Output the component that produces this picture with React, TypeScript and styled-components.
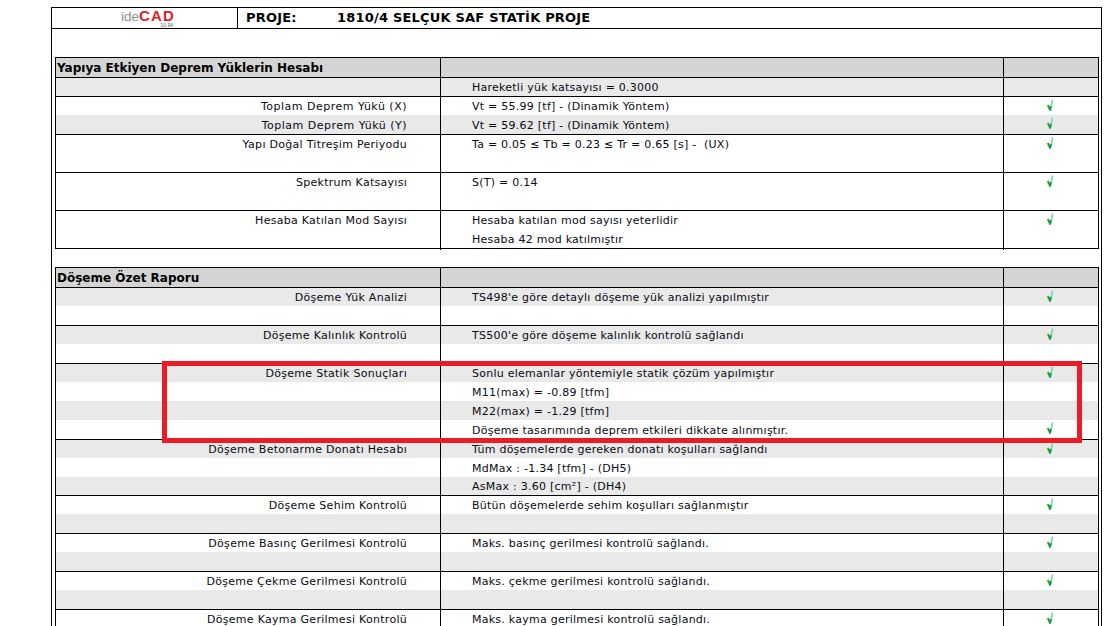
import styled, { createGlobalStyle } from "styled-components";

const GlobalStyle = createGlobalStyle`
  html, body {
    margin: 0;
    padding: 0;
    background: #fff;
    overflow: hidden;
  }
  body {
    font-family: "DejaVu Sans", Verdana, sans-serif;
    font-size: 11px;
    color: #0a0a14;
  }
`;

type RowData = {
  label?: string;
  value?: string;
  ok?: boolean;
  gray?: boolean;
  short?: boolean;
  line?: boolean;
  wide?: boolean;
};

const loadRows: RowData[] = [
  { value: "Hareketli yük katsayısı = 0.3000", gray: true, short: true, line: true },
  { label: "Toplam Deprem Yükü (X)", value: "Vt = 55.99 [tf] - (Dinamik Yöntem)", ok: true, short: true, wide: true },
  { label: "Toplam Deprem Yükü (Y)", value: "Vt = 59.62 [tf] - (Dinamik Yöntem)", ok: true, gray: true, line: true, wide: true },
  { label: "Yapı Doğal Titreşim Periyodu", value: "Ta = 0.05 ≤ Tb = 0.23 ≤ Tr = 0.65 [s] -  (UX)", ok: true, short: true },
  { line: true },
  { label: "Spektrum Katsayısı", value: "S(T) = 0.14", ok: true, short: true },
  { line: true },
  { label: "Hesaba Katılan Mod Sayısı", value: "Hesaba katılan mod sayısı yeterlidir", ok: true, short: true },
  { value: "Hesaba 42 mod katılmıştır" },
];

const slabRows: RowData[] = [
  { label: "Döşeme Yük Analizi", value: "TS498'e göre detaylı döşeme yük analizi yapılmıştır", ok: true, gray: true, short: true },
  { line: true },
  { label: "Döşeme Kalınlık Kontrolü", value: "TS500'e göre döşeme kalınlık kontrolü sağlandı", ok: true, gray: true, short: true },
  { line: true },
  { label: "Döşeme Statik Sonuçları", value: "Sonlu elemanlar yöntemiyle statik çözüm yapılmıştır", ok: true, gray: true, short: true },
  { value: "M11(max) = -0.89 [tfm]" },
  { value: "M22(max) = -1.29 [tfm]", gray: true },
  { value: "Döşeme tasarımında deprem etkileri dikkate alınmıştır.", ok: true, line: true },
  { label: "Döşeme Betonarme Donatı Hesabı", value: "Tüm döşemelerde gereken donatı koşulları sağlandı", ok: true, gray: true, short: true },
  { value: "MdMax : -1.34 [tfm] - (DH5)" },
  { value: "AsMax : 3.60 [cm²] - (DH4)", gray: true, short: true, line: true },
  { label: "Döşeme Sehim Kontrolü", value: "Bütün döşemelerde sehim koşulları sağlanmıştır", ok: true, short: true },
  { gray: true, line: true },
  { label: "Döşeme Basınç Gerilmesi Kontrolü", value: "Maks. basınç gerilmesi kontrolü sağlandı.", ok: true, short: true },
  { gray: true, line: true },
  { label: "Döşeme Çekme Gerilmesi Kontrolü", value: "Maks. çekme gerilmesi kontrolü sağlandı.", ok: true, short: true },
  { gray: true, line: true },
  { label: "Döşeme Kayma Gerilmesi Kontrolü", value: "Maks. kayma gerilmesi kontrolü sağlandı.", ok: true, short: true },
];

function CheckMark() {
  return (
    <svg width="8" height="12" viewBox="0 0 8 12">
      <path d="M6.6 0.5 L4.6 10.5" stroke="#7ed6a4" strokeWidth="1.6" fill="none" />
      <path d="M0.7 6 L3 10.5" stroke="#e6d65a" strokeWidth="1.2" fill="none" />
      <path d="M2 6 L4 10.8 L5 7" stroke="#0f9c48" strokeWidth="1.8" fill="none" />
    </svg>
  );
}

function ReportTable({ title, rows }: { title: string; rows: RowData[] }) {
  return (
    <Table>
      <HeadRow>
        <HeadCell>{title}</HeadCell>
        <HeadCell />
        <HeadCell />
      </HeadRow>
      {rows.map((row, i) => (
        <Row key={i} $gray={row.gray} $short={row.short} $line={row.line}>
          <LabelCell $wide={row.wide}>{row.label}</LabelCell>
          <ValueCell>{row.value}</ValueCell>
          <CheckCell>{row.ok ? <CheckMark /> : null}</CheckCell>
        </Row>
      ))}
    </Table>
  );
}

export default function App() {
  return (
    <>
      <GlobalStyle />
      <Page>
        <Frame>
          <TopBar>
            <LogoCell>
              <Logo>
                <LogoIde>ide</LogoIde>
                <LogoCad>CAD</LogoCad>
                <LogoVersion>10.94</LogoVersion>
              </Logo>
            </LogoCell>
            <ProjectCell>
              <ProjectKey>PROJE:</ProjectKey>
              <span>1810/4 SELÇUK SAF STATİK PROJE</span>
            </ProjectCell>
          </TopBar>
          <Tables>
            <ReportTable title="Yapıya Etkiyen Deprem Yüklerin Hesabı" rows={loadRows} />
            <ReportTable title="Döşeme Özet Raporu" rows={slabRows} />
          </Tables>
        </Frame>
        <Highlight />
      </Page>
    </>
  );
}

const Page = styled.div`
  position: relative;
  width: 1109px;
  height: 626px;
  padding: 7px 0 0 51px;
  box-sizing: border-box;
  overflow: hidden;
`;

const Frame = styled.div`
  width: 1051px;
  border: 1px solid #000;
  border-bottom: none;
  box-sizing: border-box;
`;

const TopBar = styled.div`
  display: grid;
  grid-template-columns: 186px 1fr;
  height: 20px;
  border-bottom: 1px solid #000;
`;

const LogoCell = styled.div`
  display: flex;
  justify-content: center;
  padding-left: 7px;
  border-right: 1px solid #000;
`;

const Logo = styled.div`
  position: relative;
  display: flex;
  align-items: baseline;
  height: 20px;
  font-family: "Liberation Sans", Arial, sans-serif;
  line-height: 15px;
`;

const LogoIde = styled.span`
  color: #8f8f8f;
  font-size: 13.5px;
`;

const LogoCad = styled.span`
  color: #dc1f26;
  font-size: 15px;
  font-weight: 700;
  letter-spacing: 1.2px;
`;

const LogoVersion = styled.span`
  position: absolute;
  right: 2px;
  top: 15px;
  color: #666;
  font-size: 5px;
  line-height: 5px;
`;

const ProjectCell = styled.div`
  display: flex;
  align-items: center;
  padding: 0 0 2px 8px;
  font-size: 13px;
  font-weight: 700;
  letter-spacing: 0.2px;
  color: #000;
`;

const ProjectKey = styled.span`
  width: 91px;
`;

const Tables = styled.div`
  display: flex;
  flex-direction: column;
  gap: 18px;
  padding: 28px 2px 0 3px;
`;

const Table = styled.div`
  border: 1px solid #000;
  box-sizing: border-box;
`;

const HeadRow = styled.div`
  display: grid;
  grid-template-columns: 385px 563px 1fr;
  height: 20px;
  box-sizing: border-box;
  background: #d4d4d4;
  border-bottom: 1px solid #000;
`;

const HeadCell = styled.div`
  padding-left: 1px;
  font-size: 12px;
  font-weight: 700;
  line-height: 20px;
  color: #000;
  border-right: 1px solid #000;

  &:last-child {
    border-right: none;
  }
`;

const Row = styled.div<{ $gray?: boolean; $short?: boolean; $line?: boolean }>`
  display: grid;
  grid-template-columns: 385px 563px 1fr;
  height: ${(p) => (p.$short ? 18 : 19) + (p.$line ? 1 : 0)}px;
  box-sizing: border-box;
  line-height: ${(p) => (p.$short ? 19 : 21)}px;
  background: ${(p) => (p.$gray ? "#e9e9e9" : "#fff")};
  border-bottom: ${(p) => (p.$line ? "1px solid #000" : "none")};
`;

const LabelCell = styled.div<{ $wide?: boolean }>`
  padding-right: 33px;
  text-align: right;
  letter-spacing: ${(p) => (p.$wide ? 0.5 : 0.28)}px;
  border-right: 1px solid #000;
`;

const ValueCell = styled.div`
  padding-left: 31px;
  letter-spacing: 0.25px;
  white-space: pre;
  border-right: 1px solid #000;
`;

const CheckCell = styled.div`
  display: flex;
  justify-content: center;
  padding: 2px 2px 0 0;
`;

const Highlight = styled.div`
  position: absolute;
  left: 162px;
  top: 361px;
  width: 920px;
  height: 82px;
  box-sizing: border-box;
  border: 5px solid #ed1c24;
`;
